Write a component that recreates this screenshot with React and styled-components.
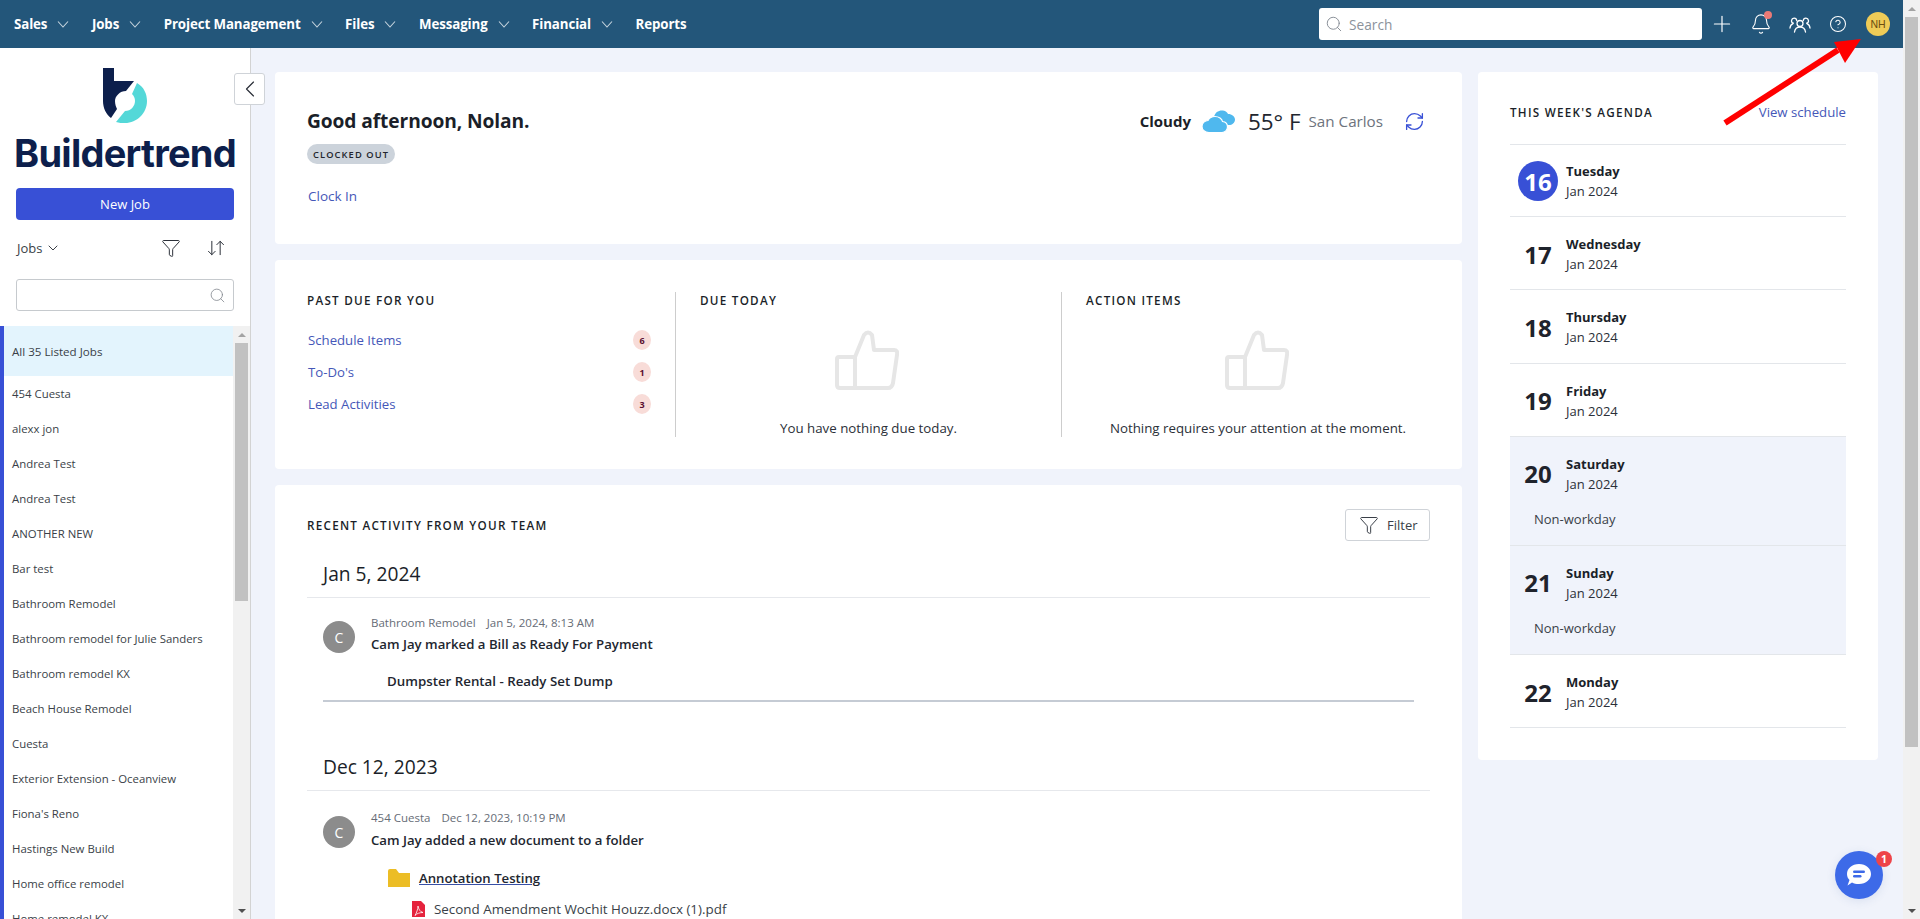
import React from "react";
import styled, { createGlobalStyle } from "styled-components";
import { Plus, Bell, CircleHelp, Search, ChevronDown, ChevronLeft, Funnel, ArrowDownUp, RefreshCw } from "lucide-react";

const Global = createGlobalStyle`
  html, body { margin: 0; padding: 0; height: 100%; overflow: hidden; background: #f0f3fb; }
  body { font-family: "Open Sans", "Noto Sans", sans-serif; color: #1c2029; font-size: 13px; }
  * { box-sizing: border-box; }
`;

const Shell = styled.div`display: flex; height: 919px; width: 1920px; overflow: hidden; position: relative;`;
const Page = styled.div`flex: 1; min-width: 0; display: flex; flex-direction: column;`;

const Bar = styled.div`
  flex: none; width: 17px; height: ${p => p.$h}px; background: #f1f1f1;
  display: flex; flex-direction: column; align-items: center;
`;
const BarCap = styled.div`
  flex: none; height: 17px; width: 100%; display: flex; align-items: center; justify-content: center;
  margin-top: ${p => (p.$end ? "auto" : "0")};
`;
const Tri = styled.div`
  width: 0; height: 0; border-left: 4px solid transparent; border-right: 4px solid transparent;
  ${p => (p.$down ? "border-top: 4px solid #505050;" : "border-bottom: 4px solid #a3a3a3;")}
`;
const Thumb = styled.div`flex: none; width: 13px; height: ${p => p.$h}px; background: #c1c1c1;`;

const Scroll = ({ h, thumb }) => (
  <Bar $h={h}>
    <BarCap><Tri /></BarCap>
    <Thumb $h={thumb} />
    <BarCap $end><Tri $down /></BarCap>
  </Bar>
);

const TopBar = styled.header`
  flex: none; height: 48px; background: #23567a; display: flex; align-items: center; padding: 0 13px 0 14px;
`;
const NavItem = styled.div`
  display: flex; align-items: center; gap: 10px; margin-right: 22.5px; color: #fff;
  font-family: "Open Sans", sans-serif; font-weight: 700; font-size: 13.3px; letter-spacing: -0.1px;
`;
const NavChevron = styled.svg`flex: none; width: 12px; height: 8px;`;
const SearchBox = styled.div`
  margin-left: auto; width: 383px; height: 32px; background: #fff; border-radius: 3px; display: flex; align-items: center;
  padding-left: 6px; gap: 6px; color: #8b929b; font-size: 13.7px; margin-right: 10px;
  svg { color: #7f868f; }
`;
const TopIcon = styled.div`
  width: 20px; height: 32px; display: flex; align-items: center; justify-content: center; color: #fff; position: relative;
  margin-right: ${p => p.$mr}px;
  svg { flex: none; }
`;
const BellDot = styled.span`
  position: absolute; top: 3px; right: -1px; width: 8px; height: 8px; border-radius: 50%; background: #ea7a76;
`;
const Avatar = styled.div`
  width: 24px; height: 24px; border-radius: 50%; background: #eecb57; color: #6b4d10; font-size: 10.5px;
  display: flex; align-items: center; justify-content: center; font-family: "Liberation Sans", sans-serif;
`;

const Body = styled.div`flex: 1; display: flex; min-height: 0;`;
const Sidebar = styled.aside`
  flex: none; width: 251px; background: #fff; border-right: 1px solid #d3d3d3; display: flex; flex-direction: column; position: relative;
`;
const Collapse = styled.button`
  position: absolute; left: 234px; top: 25px; width: 31px; height: 32px; background: #fff; border: 1px solid #cfd3d8; border-radius: 3px;
  display: flex; align-items: center; justify-content: center; padding: 0; color: #2a2f38; z-index: 2;
`;
const LogoBlock = styled.div`
  flex: none; display: flex; flex-direction: column; align-items: center; padding: 20px 0 0; width: 250px;
`;
const Wordmark = styled.div`
  font-family: Inter, sans-serif; font-weight: 700; font-size: 38px; line-height: 36px; height: 36px; letter-spacing: -0.75px; color: #0d1f4c; margin-top: 11px; white-space: nowrap;
`;
const NewJob = styled.div`
  flex: none; margin: 17px 16px 0; width: 218px; height: 32px; background: #3850d6; color: #fff; border-radius: 4px;
  display: flex; align-items: center; justify-content: center; font-size: 13px;
`;
const ListTools = styled.div`
  flex: none; display: flex; align-items: center; gap: 3px; margin-top: 12px; height: 32px; padding: 0 24px 0 17px; font-size: 13px; color: #3a3f48; width: 250px;
  svg { color: #2c313a; flex: none; }
`;
const ToolSpacer = styled.div`flex: 1;`;
const ToolIcon = styled.div`width: 20px; display: flex; justify-content: center; margin-left: ${p => p.$ml}px;`;
const SideSearch = styled.div`
  flex: none; margin: 15px 0 0 16px; width: 218px; height: 32px; border: 1px solid #c6cace; border-radius: 3px;
  display: flex; align-items: center; justify-content: flex-end; padding-right: 7px; color: #7e848b;
`;
const ListArea = styled.div`
  flex: 1; margin-top: 15px; display: flex; min-height: 0; overflow: hidden;
`;
const Strip = styled.div`flex: none; width: 4px; background: #3850d6;`;
const JobList = styled.div`flex: 1; min-width: 0; overflow: hidden;`;
const AllJobs = styled.div`
  height: 50px; background: #e3f4fd; display: flex; align-items: center; padding-left: 8px; font-size: 11.6px; color: #3a3f48;
`;
const Job = styled.div`
  height: 35px; display: flex; align-items: center; padding-left: 8px; font-size: 11.4px; color: #3a3f48; white-space: nowrap;
`;

const Main = styled.main`
  flex: 1; min-width: 0; overflow: hidden; padding: 24px 25px 0 24px; display: grid; grid-template-columns: 1187px 400px; column-gap: 16px; align-items: start;
`;
const Column = styled.div`display: flex; flex-direction: column; gap: 16px;`;
const Card = styled.section`background: #fff; border-radius: 4px;`;

const GreetCard = styled(Card)`
  height: 172px; padding: 37px 32px 0; display: flex; justify-content: space-between; align-items: flex-start;
`;
const Greeting = styled.div`font-size: 19.2px; font-weight: 700; line-height: 24px; color: #1b1f29; letter-spacing: -0.1px;`;
const Pill = styled.div`
  display: inline-flex; align-items: center; height: 20px; margin-top: 11px; padding: 0 6px; border-radius: 10px; background: #ccd3db;
  font-size: 9.3px; font-weight: 600; letter-spacing: 1.1px; color: #23262d;
`;
const TextLink = styled.a`display: block; color: #4557b8; font-size: 13.2px; line-height: 18px; white-space: nowrap;`;
const ClockIn = styled(TextLink)`margin-top: 23px; margin-left: 1px; font-size: 13.5px;`;
const Weather = styled.div`display: flex; align-items: center; height: 26px; margin-top: -1px; padding-right: 5px;`;
const Sky = styled.span`font-size: 15px; font-weight: 700; margin-right: 11px; color: #1b1f29;`;
const Temp = styled.span`font-size: 22.4px; font-weight: 400; margin: 0 8px 0 13px; white-space: nowrap; color: #22262f;`;
const City = styled.span`font-size: 15.2px; color: #6d737d; margin-right: 21px;`;

const DueCard = styled(Card)`
  height: 209px; padding: 32px 32px 0; display: grid; grid-template-columns: 369px 386px 1fr; align-items: start;
`;
const DueCol = styled.div`
  height: 145px; display: flex; flex-direction: column;
  padding: 0 ${p => p.$pr}px 0 ${p => p.$pl}px; ${p => (p.$rule ? "border-right: 1px solid #cdcdcd;" : "")}
`;
const SectionTitle = styled.h3`
  margin: 0; font-size: 11.7px; font-weight: 600; letter-spacing: 1.25px; line-height: 16px; color: #1b1f29; white-space: nowrap;
`;
const DueRows = styled.div`margin-top: 16px;`;
const DueRow = styled.div`height: 32px; display: flex; align-items: center; justify-content: space-between; padding-left: 1px;`;
const Count = styled.span`
  width: 18px; height: 20px; border-radius: 50%; background: #f8dcd8; color: #5b1030; font-size: 9px; font-weight: 700;
  display: flex; align-items: center; justify-content: center;
`;
const Empty = styled.div`
  flex: 1; display: flex; flex-direction: column; align-items: center; padding-top: 22px; font-size: 13.3px; color: #2b3038; white-space: nowrap;
`;
const EmptyText = styled.div`margin-top: 28px; line-height: 20px;`;
const ThumbIcon = styled.svg`margin-right: 3px;`;

const ActivityCard = styled(Card)`padding: 24px 32px 40px; height: 600px;`;
const ActivityHead = styled.div`display: flex; justify-content: space-between; align-items: center; height: 32px;`;
const FilterBtn = styled.div`
  width: 85px; height: 32px; border: 1px solid #cfd3d8; border-radius: 3px; display: flex; align-items: center; gap: 8px; padding-left: 13px; font-size: 13px; color: #3a3f48;
`;
const DateHead = styled.div`
  font-size: 19.2px; line-height: 28px; color: #1b1f29; padding: 0 0 9px 16px; border-bottom: 1px solid #e6e8ec; margin-top: ${p => p.$mt}px;
`;
const Item = styled.div`display: flex; gap: 16px; margin: ${p => p.$mt}px 16px 0;`;
const Who = styled.div`
  flex: none; width: 32px; height: 32px; margin-top: 6px; border-radius: 50%; background: #8c8c8c; color: #fff; display: flex; align-items: center; justify-content: center; font-size: 14px;
`;
const ItemText = styled.div`min-width: 0;`;
const Meta = styled.div`font-size: 11.5px; line-height: 16px; color: #666c76; display: flex; gap: 11px;`;
const ItemTitle = styled.div`font-size: 13.2px; font-weight: 600; line-height: 20px; margin-top: ${p => p.$mt}px; color: #22262f;`;
const Detail = styled.div`
  margin: 17px 16px 0; padding: 0 0 9px 64px; border-bottom: 2px solid #c5cbd4; font-size: 13.3px; font-weight: 600; line-height: 20px; color: #22262f;
`;
const FolderRow = styled.div`display: flex; align-items: center; gap: 9px; margin: 18px 0 0 81px; height: 20px;`;
const FolderName = styled.span`font-size: 13.2px; font-weight: 600; color: #22262f; text-decoration: underline; text-decoration-color: #3850a6;`;
const FileRow = styled.div`display: flex; align-items: center; gap: 9px; margin: 11px 0 0 105px; height: 20px; font-size: 13.4px; color: #3a3f48;`;

const AgendaCard = styled(Card)`height: 688px; padding: 32px 32px 0;`;
const AgendaHead = styled.div`
  display: flex; justify-content: space-between; align-items: center; height: 16px; margin-bottom: 24px;
`;
const AgendaRow = styled.div`
  border-top: ${p => (p.$first ? "1px solid #e3e6ea" : "0")}; border-bottom: 1px solid #e3e6ea; padding: ${p => (p.$first ? "16px" : "17px")} 0 15.2px 8px;
  background: ${p => (p.$off ? "#f0f3fb" : "transparent")};
`;
const DayLine = styled.div`display: flex; align-items: center; height: 40px;`;
const DayNum = styled.div`
  flex: none; width: 40px; height: 40px; margin-right: 8px; border-radius: 50%; display: flex; align-items: center; justify-content: center;
  font-size: 24px; font-weight: 700; color: ${p => (p.$today ? "#fff" : "#1f232c")}; background: ${p => (p.$today ? "#3850d6" : "transparent")};
`;
const DayName = styled.div`font-size: 13px; font-weight: 700; line-height: 20px; color: #1b1f29;`;
const DayMonth = styled.div`font-size: 13px; line-height: 20px; color: #2b3038;`;
const Off = styled.div`margin: 15px 0 1px 16px; font-size: 13px; line-height: 20px; color: #3a3f48;`;

const ArrowMark = styled.svg`position: absolute; left: 1720px; top: 36px; z-index: 5; pointer-events: none;`;
const Chat = styled.div`
  position: absolute; left: 1835px; top: 851px; width: 48px; height: 48px; border-radius: 50%; background: #3d6ae8; z-index: 5;
  display: flex; align-items: center; justify-content: center; box-shadow: 0 2px 10px rgba(60, 90, 160, 0.12);
`;
const ChatBadge = styled.span`
  position: absolute; left: 41px; top: 0; width: 16px; height: 16px; border-radius: 50%; background: #ee4449; color: #fff;
  font-size: 10.5px; font-weight: 700; display: flex; align-items: center; justify-content: center;
`;

const Mark = () => (
  <svg width="44" height="56" viewBox="0 0 44 56">
    <path fill="#0d1f4c" d="M0 0H11V13H31L23 23C17 23 12 28 12 33C12 36 13 39 14 41L8 50C3 46 0 40 0 33Z" />
    <path fill="#54d8d8" d="M34 15C41 19 44 26 44 33C44 45 34 55 22 55C19 55 16 55 13 54L22 43C28 43 32 38 32 33C32 30 31 28 29 26Z" />
  </svg>
);
const Team = () => (
  <svg width="22" height="18" viewBox="0 0 22 18" fill="none" stroke="#fff" strokeWidth="1.3" strokeLinecap="round">
    <circle cx="11" cy="8.5" r="3" />
    <path d="M5.5 17c.4-3 2.6-4.8 5.5-4.8s5.100 1.800 5.500 4.800" />
    <path d="M7.700 5.500A2.600 2.600 0 1 0 4.300 8.200M1 13c.2-2 1.300-3.600 3-4.300" />
    <path d="M14.300 5.500A2.600 2.600 0 1 1 17.700 8.200M21 13c-.2-2-1.300-3.600-3-4.300" />
  </svg>
);
const Cloud = () => (
  <svg width="33" height="24" viewBox="0 0 33 24" fill="#4fb8ee">
    <path d="M12 8C13 3 17 1 21 1.500C24 2 25.500 3.500 26 5C30 5 33 7.500 33 10.500C33 14 30 16 27 16H22Z" />
    <path stroke="#fff" strokeWidth="1.200" d="M7 23.500C3 23.500 0 21 0 17.500C0 14 3 11.500 6 11.500C7.500 8.500 10.500 7.500 13 7.500C17 7.500 20 10 20.500 12.500C24 12.800 25.500 15 25.500 18C25.500 21 23 23.500 20 23.500Z" />
  </svg>
);
const Thumbs = () => (
  <ThumbIcon width="64" height="60" viewBox="0 0 64 60" fill="none" stroke="#e6e6e6" strokeWidth="4" strokeLinejoin="round">
    <path d="M20 27H4Q2 27 2 29V55Q2 58 5 58H20Z" />
    <path d="M20 27L29 5Q33 0 37 5L39 20H59Q63 20 62 25L58 53Q57 58 53 58H20" />
  </ThumbIcon>
);
const Folder = () => (
  <svg width="22" height="18" viewBox="0 0 22 18"><path fill="#ecbd25" d="M0 2Q0 0 2 0H8L11 4H22V18H0Z" /></svg>
);
const Pdf = () => (
  <svg width="13" height="16" viewBox="0 0 13 16">
    <path fill="#e5233d" d="M0 0H9L13 4V16H0Z" />
    <path fill="none" stroke="#fff" strokeWidth="0.800" d="M6 5C6.500 8 8 11 11 11.500C8 11.500 4.500 12.500 3 14.500C4.500 12 6 8 6 5Z" />
  </svg>
);
const Bubble = () => (
  <svg width="26" height="24" viewBox="0 0 26 24">
    <path fill="#fff" d="M13 1C20 1 25 5.500 25 11C25 16.500 20 21 13 21C10 21 8 20.500 6 19.500L1.500 22.500L3.500 17C2 15.500 1 13.500 1 11C1 5.500 6 1 13 1Z" />
    <rect x="7" y="7.500" width="12" height="2.400" rx="1.200" fill="#3d6ae8" />
    <rect x="7" y="12" width="8.500" height="2.400" rx="1.200" fill="#3d6ae8" />
  </svg>
);

const NAV = ["Sales", "Jobs", "Project Management", "Files", "Messaging", "Financial"];
const JOBS = ["454 Cuesta", "alexx jon", "Andrea Test", "Andrea Test", "ANOTHER NEW", "Bar test", "Bathroom Remodel", "Bathroom remodel for Julie Sanders", "Bathroom remodel KX", "Beach House Remodel", "Cuesta", "Exterior Extension - Oceanview", "Fiona's Reno", "Hastings New Build", "Home office remodel", "Home remodel KX"];
const DAYS = [
  { n: 16, d: "Tuesday", today: true },
  { n: 17, d: "Wednesday" },
  { n: 18, d: "Thursday" },
  { n: 19, d: "Friday" },
  { n: 20, d: "Saturday", off: true },
  { n: 21, d: "Sunday", off: true },
  { n: 22, d: "Monday" },
];

export default function App() {
  return (
    <Shell>
      <Global />
      <Page>
        <TopBar>
          {NAV.map(n => (
            <NavItem key={n}>
              {n}
              <NavChevron viewBox="0 0 12 8" fill="none" stroke="#c6d4de" strokeWidth="1.1"><path d="M1 1.500L6 7L11 1.500" /></NavChevron>
            </NavItem>
          ))}
          <NavItem>Reports</NavItem>
          <SearchBox><Search size={18} strokeWidth={1.2} />Search</SearchBox>
          <TopIcon $mr={19}><Plus size={26} strokeWidth={1.1} /></TopIcon>
          <TopIcon $mr={19}><Bell size={22} strokeWidth={1.2} /><BellDot /></TopIcon>
          <TopIcon $mr={18}><Team /></TopIcon>
          <TopIcon $mr={18}><CircleHelp size={18} strokeWidth={1.4} /></TopIcon>
          <Avatar>NH</Avatar>
        </TopBar>
        <Body>
          <Sidebar>
            <Collapse><ChevronLeft size={28} strokeWidth={1} /></Collapse>
            <LogoBlock>
              <Mark />
              <Wordmark>Buildertrend</Wordmark>
            </LogoBlock>
            <NewJob>New Job</NewJob>
            <ListTools>
              Jobs <ChevronDown size={16} strokeWidth={1.4} />
              <ToolSpacer />
              <ToolIcon $ml={0}><Funnel size={20} strokeWidth={1.2} /></ToolIcon>
              <ToolIcon $ml={22}><ArrowDownUp size={20} strokeWidth={1.2} /></ToolIcon>
            </ListTools>
            <SideSearch><Search size={17} strokeWidth={1.1} /></SideSearch>
            <ListArea>
              <Strip />
              <JobList>
                <AllJobs>All 35 Listed Jobs</AllJobs>
                {JOBS.map((j, i) => <Job key={i}>{j}</Job>)}
              </JobList>
              <Scroll h={593} thumb={258} />
            </ListArea>
          </Sidebar>
          <Main>
            <Column>
              <GreetCard>
                <div>
                  <Greeting>Good afternoon, Nolan.</Greeting>
                  <Pill>CLOCKED OUT</Pill>
                  <ClockIn>Clock In</ClockIn>
                </div>
                <Weather>
                  <Sky>Cloudy</Sky>
                  <Cloud />
                  <Temp>55° F</Temp>
                  <City>San Carlos</City>
                  <RefreshCw size={21} strokeWidth={1.5} color="#3850d6" />
                </Weather>
              </GreetCard>
              <DueCard>
                <DueCol $rule $pr={24} $pl={0}>
                  <SectionTitle>PAST DUE FOR YOU</SectionTitle>
                  <DueRows>
                    <DueRow><TextLink>Schedule Items</TextLink><Count>6</Count></DueRow>
                    <DueRow><TextLink>To-Do's</TextLink><Count>1</Count></DueRow>
                    <DueRow><TextLink>Lead Activities</TextLink><Count>3</Count></DueRow>
                  </DueRows>
                </DueCol>
                <DueCol $rule $pr={24} $pl={24}>
                  <SectionTitle>DUE TODAY</SectionTitle>
                  <Empty><Thumbs /><EmptyText>You have nothing due today.</EmptyText></Empty>
                </DueCol>
                <DueCol $pr={0} $pl={24}>
                  <SectionTitle>ACTION ITEMS</SectionTitle>
                  <Empty><Thumbs /><EmptyText>Nothing requires your attention at the moment.</EmptyText></Empty>
                </DueCol>
              </DueCard>
              <ActivityCard>
                <ActivityHead>
                  <SectionTitle>RECENT ACTIVITY FROM YOUR TEAM</SectionTitle>
                  <FilterBtn><Funnel size={20} strokeWidth={1.2} />Filter</FilterBtn>
                </ActivityHead>
                <DateHead $mt={19}>Jan 5, 2024</DateHead>
                <Item $mt={17}>
                  <Who>C</Who>
                  <ItemText>
                    <Meta><span>Bathroom Remodel</span><span>Jan 5, 2024, 8:13 AM</span></Meta>
                    <ItemTitle $mt={3}>Cam Jay marked a Bill as Ready For Payment</ItemTitle>
                  </ItemText>
                </Item>
                <Detail>Dumpster Rental - Ready Set Dump</Detail>
                <DateHead $mt={51}>Dec 12, 2023</DateHead>
                <Item $mt={19}>
                  <Who>C</Who>
                  <ItemText>
                    <Meta><span>454 Cuesta</span><span>Dec 12, 2023, 10:19 PM</span></Meta>
                    <ItemTitle $mt={4}>Cam Jay added a new document to a folder</ItemTitle>
                  </ItemText>
                </Item>
                <FolderRow><Folder /><FolderName>Annotation Testing</FolderName></FolderRow>
                <FileRow><Pdf />Second Amendment Wochit Houzz.docx (1).pdf</FileRow>
              </ActivityCard>
            </Column>
            <AgendaCard>
              <AgendaHead>
                <SectionTitle>THIS WEEK'S AGENDA</SectionTitle>
                <TextLink>View schedule</TextLink>
              </AgendaHead>
              {DAYS.map((x, i) => (
                <AgendaRow key={x.n} $first={i === 0} $off={x.off}>
                  <DayLine>
                    <DayNum $today={x.today}>{x.n}</DayNum>
                    <div>
                      <DayName>{x.d}</DayName>
                      <DayMonth>Jan 2024</DayMonth>
                    </div>
                  </DayLine>
                  {x.off && <Off>Non-workday</Off>}
                </AgendaRow>
              ))}
            </AgendaCard>
          </Main>
        </Body>
      </Page>
      <Scroll h={919} thumb={730} />
      <ArrowMark width="150" height="92" viewBox="0 0 150 92">
        <path d="M5 87L118 14" stroke="#ff0000" strokeWidth="6" fill="none" />
        <path d="M141 3L114 6L125 27Z" fill="#ff0000" />
      </ArrowMark>
      <Chat><Bubble /><ChatBadge>1</ChatBadge></Chat>
    </Shell>
  );
}
